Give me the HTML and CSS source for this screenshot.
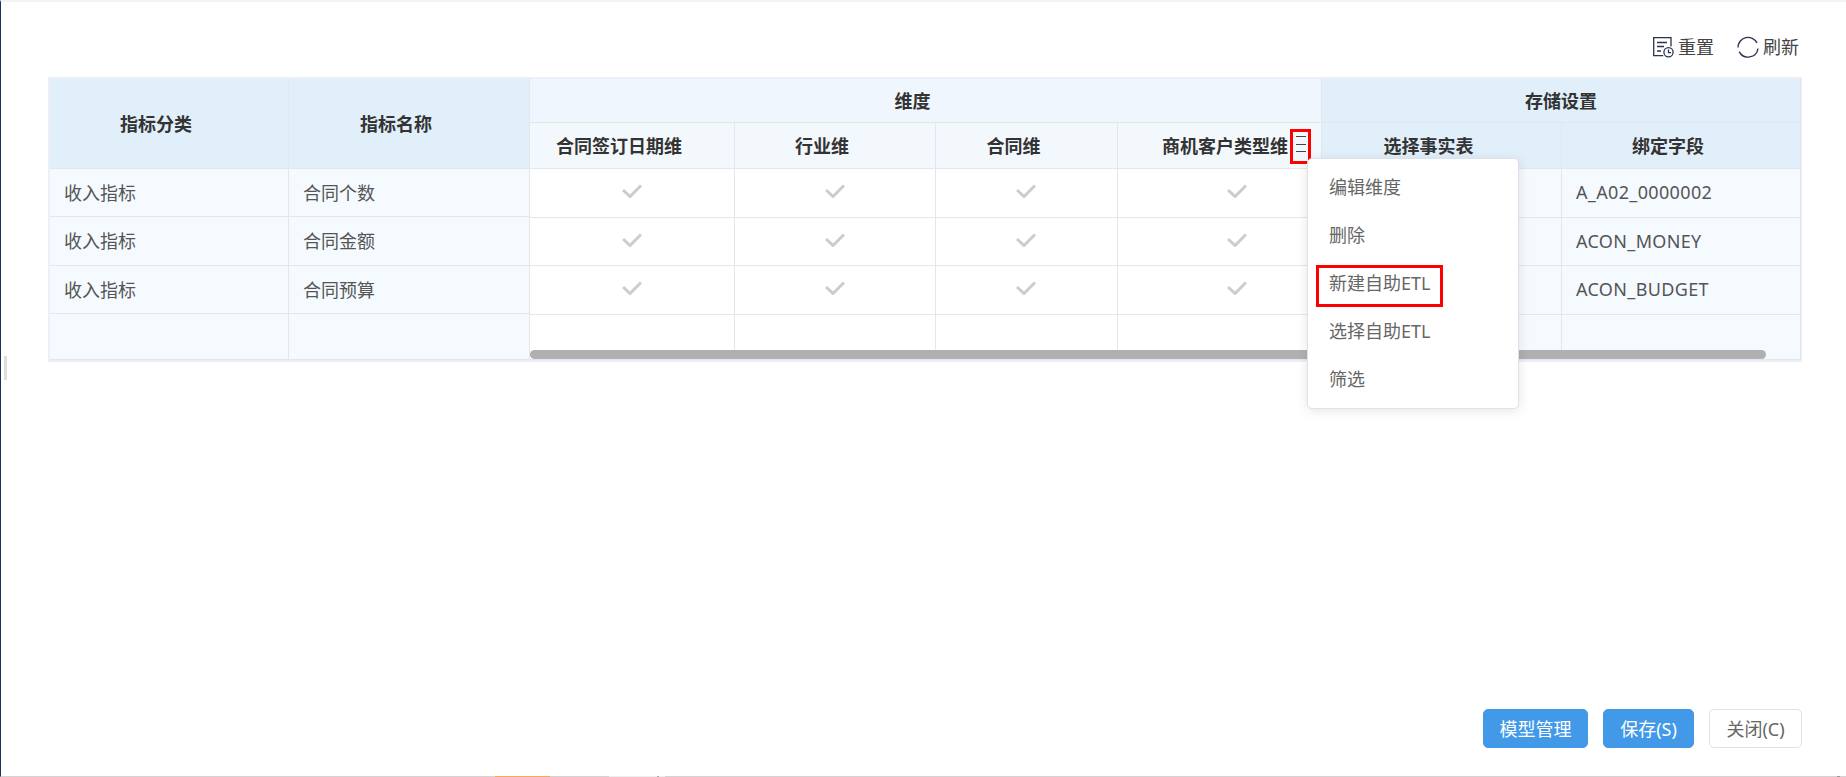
FILE: index.html
```html
<!DOCTYPE html>
<html lang="zh-CN">
<head>
<meta charset="utf-8">
<title>指标模型</title>
<link rel="stylesheet" href="styles.css">
</head>
<body>
<div class="page">
  <span class="handle"></span>
  <span class="edge edge-orange"></span>
  <span class="edge edge-pale"></span>
  <span class="edge edge-dot"></span>
  <span class="edge edge-dot-end"></span>
  <div class="toolbar">
    <button class="tool" type="button">
      <svg class="ico" width="21" height="21" viewBox="0 0 21 21" fill="none" stroke="#2b3350" stroke-width="1.3">
        <path d="M18 9.5V.7H.7v18h9.5"/>
        <path d="M4 5.5h10M4 9.5h7M4 14h4"/>
        <circle cx="15.5" cy="15.2" r="4.6"/>
        <path d="M15.5 12.6v3h2.5"/>
      </svg>
      <span>重置</span>
    </button>
    <button class="tool" type="button">
      <svg class="ico" width="22" height="22" viewBox="0 0 22 22" fill="none" stroke="#2b3350" stroke-width="1.4">
        <path d="M1 11.5A10 10 0 0 1 20 7"/>
        <path d="M21 12.5A10 10 0 0 1 2.2 15.6"/>
      </svg>
      <span>刷新</span>
    </button>
  </div>

  <div class="sheet">
    <div class="frozen">
      <div class="cell head dark">指标分类</div>
      <div class="cell head dark">指标名称</div>
      <div class="cell soft left">收入指标</div>
      <div class="cell soft left">合同个数</div>
      <div class="cell soft left">收入指标</div>
      <div class="cell soft left">合同金额</div>
      <div class="cell soft left">收入指标</div>
      <div class="cell soft left">合同预算</div>
      <div class="cell soft"></div>
      <div class="cell soft"></div>
    </div>
    <div class="scroller">
      <div class="cell head light wide-4">维度</div>
      <div class="cell head dark wide-2 head-plain">存储设置</div>
      <div class="cell head lighter">合同签订日期维</div>
      <div class="cell head lighter">行业维</div>
      <div class="cell head lighter">合同维</div>
      <div class="cell head lighter dim-last">商机客户类型维<span class="burger"><i></i><i></i><i></i></span></div>
      <div class="cell head dark">选择事实表</div>
      <div class="cell head dark">绑定字段</div>

      <div class="cell"><svg class="check" viewBox="0 0 20 14"><path d="M1 6l7 6.5L19 1.5"/></svg></div>
      <div class="cell"><svg class="check" viewBox="0 0 20 14"><path d="M1 6l7 6.5L19 1.5"/></svg></div>
      <div class="cell"><svg class="check check-third" viewBox="0 0 20 14"><path d="M1 6l7 6.5L19 1.5"/></svg></div>
      <div class="cell"><svg class="check check-last" viewBox="0 0 20 14"><path d="M1 6l7 6.5L19 1.5"/></svg></div>
      <div class="cell soft left"></div>
      <div class="cell soft left code">A_A02_0000002</div>

      <div class="cell"><svg class="check" viewBox="0 0 20 14"><path d="M1 6l7 6.5L19 1.5"/></svg></div>
      <div class="cell"><svg class="check" viewBox="0 0 20 14"><path d="M1 6l7 6.5L19 1.5"/></svg></div>
      <div class="cell"><svg class="check check-third" viewBox="0 0 20 14"><path d="M1 6l7 6.5L19 1.5"/></svg></div>
      <div class="cell"><svg class="check check-last" viewBox="0 0 20 14"><path d="M1 6l7 6.5L19 1.5"/></svg></div>
      <div class="cell soft left"></div>
      <div class="cell soft left code">ACON_MONEY</div>

      <div class="cell"><svg class="check" viewBox="0 0 20 14"><path d="M1 6l7 6.5L19 1.5"/></svg></div>
      <div class="cell"><svg class="check" viewBox="0 0 20 14"><path d="M1 6l7 6.5L19 1.5"/></svg></div>
      <div class="cell"><svg class="check check-third" viewBox="0 0 20 14"><path d="M1 6l7 6.5L19 1.5"/></svg></div>
      <div class="cell"><svg class="check check-last" viewBox="0 0 20 14"><path d="M1 6l7 6.5L19 1.5"/></svg></div>
      <div class="cell soft left"></div>
      <div class="cell soft left code">ACON_BUDGET</div>

      <div class="cell"></div>
      <div class="cell"></div>
      <div class="cell"></div>
      <div class="cell"></div>
      <div class="cell soft"></div>
      <div class="cell soft"></div>
      <span class="scrollbar"></span>
    </div>
    <span class="mark-burger"></span>
    <ul class="menu">
      <li>编辑维度</li>
      <li>删除</li>
      <li class="marked">新建自助ETL</li>
      <li>选择自助ETL</li>
      <li>筛选</li>
    </ul>
  </div>

  <div class="footer">
    <button class="btn primary btn-model" type="button">模型管理</button>
    <button class="btn primary btn-save" type="button">保存(S)</button>
    <button class="btn" type="button">关闭(C)</button>
  </div>
</div>
</body>
</html>
```
FILE: styles.css
```css
*, *::before, *::after { box-sizing: border-box; }
html, body { margin: 0; height: 100%; background: #fff; overflow: hidden; }
body { font-family: "Noto Sans", "Noto Sans CJK SC", sans-serif; font-size: 18px; color: #555; }

.page {
  position: relative;
  height: 777px;
  display: flex;
  flex-direction: column;
  padding: 0 44px 0 48px;
  border-left: 1px solid #1f2d63;
  border-top: 2px solid #f3f3f3;
  border-bottom: 1px solid #d6d2d2;
}
.handle { position: absolute; left: 3px; top: 354px; width: 3px; height: 24px; background: #dfdfdf; }
.edge { position: absolute; bottom: -1px; height: 1px; }
.edge-orange { left: 494px; width: 55px; background: #f4a860; }
.edge-pale { left: 608px; width: 56px; background: #eee; }
.edge-dot { left: 656px; width: 2px; background: #aaa; }
.edge-dot-end { left: 1836px; width: 3px; background: #999; }

.toolbar { height: 75px; display: flex; justify-content: flex-end; align-items: flex-start; padding: 34px 3px 0 0; gap: 23px; }
.tool { display: flex; align-items: center; gap: 4px; padding: 0; height: 22px; border: 0; background: none; font: inherit; color: #444; }
.tool span { margin-top: -2px; }
.ico { display: block; flex: none; }

.sheet {
  position: relative;
  display: flex;
  width: 1754px;
  margin-left: -1px;
  border: solid #eceff6;
  border-width: 2px 1px 2px 2px;
}
.frozen {
  display: grid;
  grid-template-columns: 239px 241px;
  grid-template-rows: 90px 48px 49px 48px 46px;
  height: 281px;
}
.scroller {
  position: relative;
  display: grid;
  grid-template-columns: 205px 201px 182px 204px 240px 239px;
  grid-template-rows: 44px 46px 49px 48px 49px 45px;
  height: 281px;
  flex: 1;
}
.cell {
  display: flex;
  align-items: center;
  justify-content: center;
  padding-bottom: 2px;
  border-right: 1px solid #e3e6ec;
  border-bottom: 1px solid #e3e6ec;
  min-width: 0;
  white-space: nowrap;
}
.head { font-weight: 700; color: #333; padding-right: 26px; }
.head-plain { padding-right: 0; }
.dark { background: #e1effb; }
.light { background: #eff6fd; }
.lighter { background: #f3f8fd; }
.soft { background: #f5faff; }
.left { justify-content: flex-start; padding-left: 14px; }
.code { letter-spacing: .35px; }
.wide-4 { grid-column: span 4; }
.wide-2 { grid-column: span 2; }
.dim-last { justify-content: flex-end; padding-right: 15px; gap: 8px; }

.burger { display: flex; flex-direction: column; gap: 6.5px; width: 10px; margin-top: -1px; }
.burger i { display: block; height: 1px; background: #444; }

.check { width: 20px; height: 14px; fill: none; stroke: #ccc; stroke-width: 3; margin-top: -2px; }
.check-third { margin-right: 2px; }
.check-last { margin-left: 34px; }

.scrollbar { position: absolute; left: 0; bottom: 1px; width: 1236px; height: 9px; border-radius: 5px; background: #b0b0b0; }

.mark-burger { position: absolute; left: 1240px; top: 50px; width: 21px; height: 35px; border: 3px solid #f00; }

.menu {
  position: absolute;
  left: 1257px;
  top: 79px;
  width: 212px;
  height: 251px;
  margin: 0;
  padding: 5px 0;
  list-style: none;
  background: #fff;
  border: 1px solid #dfe1ea;
  border-radius: 5px;
  box-shadow: 0 2px 12px rgba(0, 0, 0, .1);
  color: #666;
}
.menu li { position: relative; height: 48px; line-height: 47px; padding-left: 21px; }
.marked::before { content: ""; position: absolute; left: 8px; top: 5px; width: 127px; height: 42px; border: 3px solid #f00; }

.footer { flex: 1; display: flex; justify-content: flex-end; align-items: flex-start; padding-top: 347px; gap: 15px; }
.btn { width: 93px; height: 39px; padding: 0 0 2px; font: inherit; color: #666; background: #fff; border: 1px solid #dfe1ea; border-radius: 5px; }
.primary { color: #fff; background: #4299e8; border-color: #4299e8; }
.btn-model { width: 105px; }
.btn-save { width: 91px; }
```
